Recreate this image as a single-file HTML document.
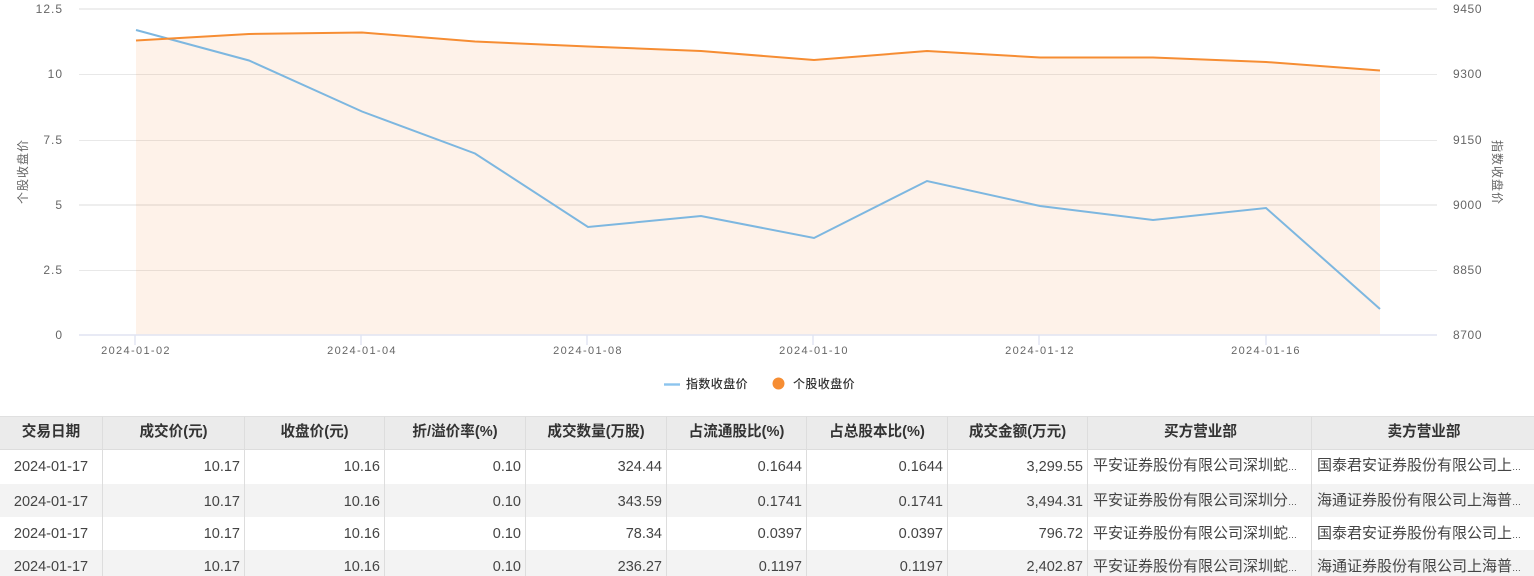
<!DOCTYPE html>
<html lang="zh">
<head>
<meta charset="utf-8">
<style>
html,body{margin:0;padding:0;background:#fff;width:1534px;height:576px;overflow:hidden}
body{position:relative;font-family:"Liberation Sans","Noto Sans CJK SC",sans-serif}
svg{position:absolute;left:0;top:0}
svg text{font-family:"Liberation Sans","Noto Sans CJK SC",sans-serif;font-size:12px;fill:#666;letter-spacing:1px}
table{position:absolute;left:0;top:416px;width:1534px;border-collapse:separate;border-spacing:0;table-layout:fixed;font-size:14.5px;color:#444}
th,td{padding:0 4px;height:33px;box-sizing:border-box;border-right:1px solid #ddd;white-space:nowrap;overflow:hidden;line-height:20px}
th:last-child,td:last-child{border-right:0}
th{background:#ebebeb;height:34px;border-top:1px solid #e0e0e0;border-bottom:1px solid #ddd;font-weight:bold;font-size:14.6px;text-align:center;color:#333;padding-bottom:2px}
th:nth-child(n+9){padding-left:6px}
td{text-align:right;padding-top:2px}
tr:nth-child(n+4) td{padding-top:1px}
tr.a td{height:34px;padding-top:0;padding-bottom:1px}
td.c{text-align:center}
td.l{text-align:left;padding-left:5px;font-size:15px}
td.l span{font-size:9px}
tr.g td{background:#f3f3f3}
</style>
</head>
<body>
<svg width="1534" height="400" viewBox="0 0 1534 400">
  <g stroke="#e8e8e8" fill="none">
    <line x1="79" x2="1437" y1="9" y2="9" stroke-width="1.6"/>
    <line x1="79" x2="1437" y1="74.5" y2="74.5"/>
    <line x1="79" x2="1437" y1="140.5" y2="140.5"/>
    <line x1="79" x2="1437" y1="205" y2="205" stroke-width="1.4"/>
    <line x1="79" x2="1437" y1="270.5" y2="270.5"/>
  </g>
  <polygon fill="#f5893a" fill-opacity=".11" points="136,40.5 249,34 362,32.5 475,41.5 588,46.5 701,51 814,60 927,51 1040,57.5 1153,57.5 1266,62 1380,70.5 1380,335 136,335"/>
  <g stroke="#e0e4f2" fill="none">
    <line x1="79" x2="1437" y1="335" y2="335" stroke-width="1.4"/>
    <path d="M135 335v10M361 335v10M587 335v10M813 335v10M1039 335v10M1266 335v10" stroke-width="1.4"/>
  </g>
  <polyline fill="none" stroke="#7db7e0" stroke-width="2" points="136,30 249,60.5 362,111.5 475,153.5 588,227 701,216 814,238 927,181 1040,206 1153,220 1266,208 1380,309"/>
  <polyline fill="none" stroke="#f68d33" stroke-width="2" points="136,40.5 249,34 362,32.5 475,41.5 588,46.5 701,51 814,60 927,51 1040,57.5 1153,57.5 1266,62 1380,70.5"/>

  <g text-anchor="end">
    <text x="63" y="13">12.5</text>
    <text x="63" y="78">10</text>
    <text x="63" y="144">7.5</text>
    <text x="63" y="209">5</text>
    <text x="63" y="274">2.5</text>
    <text x="63" y="339">0</text>
  </g>
  <g>
    <text x="1453" y="13" style="letter-spacing:.6px">9450</text>
    <text x="1453" y="78" style="letter-spacing:.6px">9300</text>
    <text x="1453" y="144" style="letter-spacing:.6px">9150</text>
    <text x="1453" y="209" style="letter-spacing:.6px">9000</text>
    <text x="1453" y="274" style="letter-spacing:.6px">8850</text>
    <text x="1453" y="339" style="letter-spacing:.6px">8700</text>
  </g>
  <g text-anchor="middle" style="font-size:11px">
    <text x="136" y="354" style="font-size:11px;letter-spacing:1.35px">2024-01-02</text>
    <text x="362" y="354" style="font-size:11px;letter-spacing:1.35px">2024-01-04</text>
    <text x="588" y="354" style="font-size:11px;letter-spacing:1.35px">2024-01-08</text>
    <text x="814" y="354" style="font-size:11px;letter-spacing:1.35px">2024-01-10</text>
    <text x="1040" y="354" style="font-size:11px;letter-spacing:1.35px">2024-01-12</text>
    <text x="1266" y="354" style="font-size:11px;letter-spacing:1.35px">2024-01-16</text>
  </g>
  <text transform="translate(27,204) rotate(-90)" style="letter-spacing:1px">个股收盘价</text>
  <text transform="translate(1493,140) rotate(90)" style="letter-spacing:1px">指数收盘价</text>

  <line x1="664" x2="680" y1="384.5" y2="384.5" stroke="#8cc4ee" stroke-width="2.4"/>
  <circle cx="778.5" cy="383.5" r="6" fill="#f68d33"/>
  <text x="686" y="388" style="fill:#333;letter-spacing:.4px;font-weight:500">指数收盘价</text>
  <text x="793" y="388" style="fill:#333;letter-spacing:.4px;font-weight:500">个股收盘价</text>
</svg>

<table>
<colgroup>
<col style="width:103px"><col style="width:142px"><col style="width:140px"><col style="width:141px"><col style="width:141px"><col style="width:140px"><col style="width:141px"><col style="width:140px"><col style="width:224px"><col style="width:222px">
</colgroup>
<tr><th>交易日期</th><th>成交价(元)</th><th>收盘价(元)</th><th>折/溢价率(%)</th><th>成交数量(万股)</th><th>占流通股比(%)</th><th>占总股本比(%)</th><th>成交金额(万元)</th><th>买方营业部</th><th>卖方营业部</th></tr>
<tr class="a"><td class="c">2024-01-17</td><td>10.17</td><td>10.16</td><td>0.10</td><td>324.44</td><td>0.1644</td><td>0.1644</td><td>3,299.55</td><td class="l">平安证券股份有限公司深圳蛇<span>…</span></td><td class="l">国泰君安证券股份有限公司上<span>…</span></td></tr>
<tr class="g"><td class="c">2024-01-17</td><td>10.17</td><td>10.16</td><td>0.10</td><td>343.59</td><td>0.1741</td><td>0.1741</td><td>3,494.31</td><td class="l">平安证券股份有限公司深圳分<span>…</span></td><td class="l">海通证券股份有限公司上海普<span>…</span></td></tr>
<tr><td class="c">2024-01-17</td><td>10.17</td><td>10.16</td><td>0.10</td><td>78.34</td><td>0.0397</td><td>0.0397</td><td>796.72</td><td class="l">平安证券股份有限公司深圳蛇<span>…</span></td><td class="l">国泰君安证券股份有限公司上<span>…</span></td></tr>
<tr class="g"><td class="c">2024-01-17</td><td>10.17</td><td>10.16</td><td>0.10</td><td>236.27</td><td>0.1197</td><td>0.1197</td><td>2,402.87</td><td class="l">平安证券股份有限公司深圳蛇<span>…</span></td><td class="l">海通证券股份有限公司上海普<span>…</span></td></tr>
</table>
</body>
</html>
